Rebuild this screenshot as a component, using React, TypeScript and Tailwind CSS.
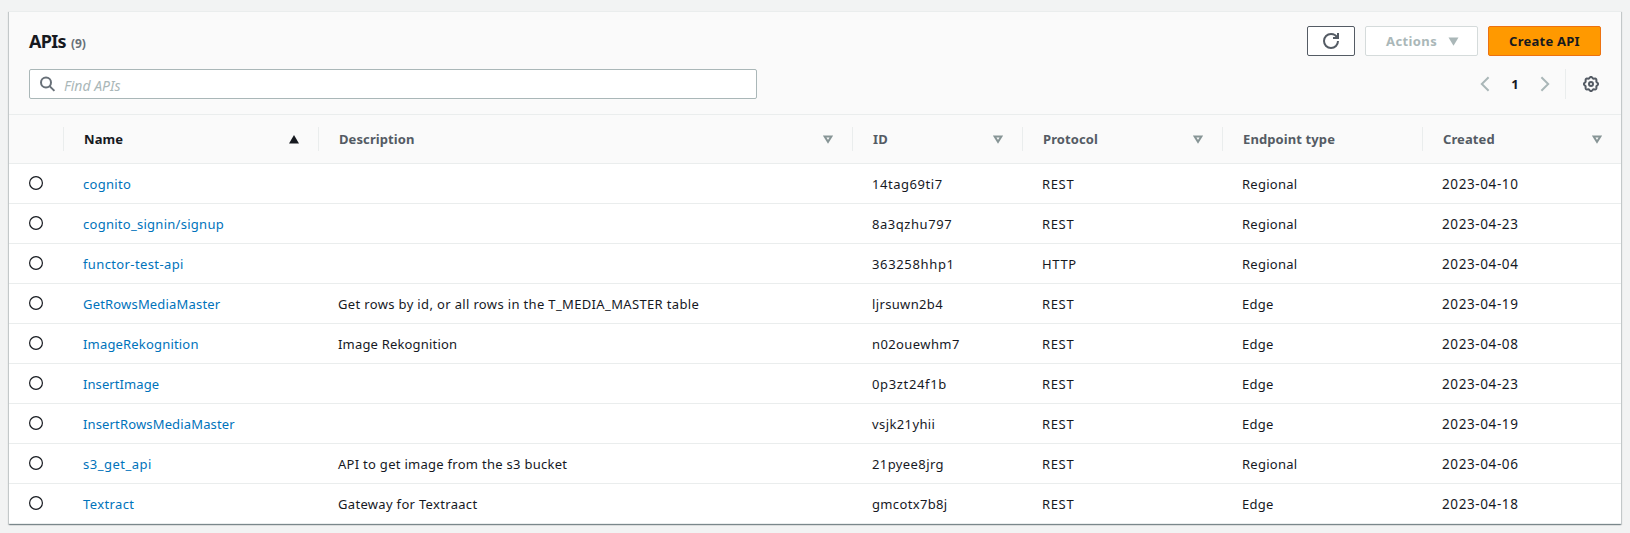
import React from "react";

type Api = {
  name: string;
  nameTracking: string;
  description?: string;
  descriptionTracking?: string;
  id: string;
  idTracking: string;
  protocol: string;
  endpoint: string;
  created: string;
};

const apis: Api[] = [
  { name: "cognito", nameTracking: "tracking-[0.3px]", id: "14tag69ti7", idTracking: "tracking-[0.55px]", protocol: "REST", endpoint: "Regional", created: "2023-04-10" },
  { name: "cognito_signin/signup", nameTracking: "tracking-[0.27px]", id: "8a3qzhu797", idTracking: "tracking-[0.55px]", protocol: "REST", endpoint: "Regional", created: "2023-04-23" },
  { name: "functor-test-api", nameTracking: "tracking-[0.38px]", id: "363258hhp1", idTracking: "tracking-[0.65px]", protocol: "HTTP", endpoint: "Regional", created: "2023-04-04" },
  { name: "GetRowsMediaMaster", nameTracking: "tracking-[0.18px]", description: "Get rows by id, or all rows in the T_MEDIA_MASTER table", descriptionTracking: "tracking-[0.35px]", id: "ljrsuwn2b4", idTracking: "tracking-[0.35px]", protocol: "REST", endpoint: "Edge", created: "2023-04-19" },
  { name: "ImageRekognition", nameTracking: "tracking-[0.18px]", description: "Image Rekognition", descriptionTracking: "tracking-[0.18px]", id: "n02ouewhm7", idTracking: "tracking-[0.4px]", protocol: "REST", endpoint: "Edge", created: "2023-04-08" },
  { name: "InsertImage", nameTracking: "tracking-[0.08px]", id: "0p3zt24f1b", idTracking: "tracking-[0.65px]", protocol: "REST", endpoint: "Edge", created: "2023-04-23" },
  { name: "InsertRowsMediaMaster", nameTracking: "tracking-[0.15px]", id: "vsjk21yhii", idTracking: "tracking-[0.4px]", protocol: "REST", endpoint: "Edge", created: "2023-04-19" },
  { name: "s3_get_api", nameTracking: "tracking-[0.5px]", description: "API to get image from the s3 bucket", descriptionTracking: "tracking-[0.28px]", id: "21pyee8jrg", idTracking: "tracking-[0.4px]", protocol: "REST", endpoint: "Regional", created: "2023-04-06" },
  { name: "Textract", nameTracking: "tracking-[0.38px]", description: "Gateway for Textraact", descriptionTracking: "tracking-[0.32px]", id: "gmcotx7b8j", idTracking: "tracking-[0.35px]", protocol: "REST", endpoint: "Edge", created: "2023-04-18" },
];

const grid = "grid grid-cols-[54px_255px_534px_170px_200px_200px_199px]";

// Scalloped ring with eight lobes
const gearOutline =
  Array.from({ length: 96 }, (_, i) => {
    const a = (i / 96) * Math.PI * 2;
    const r = 6.5 + 0.6 * Math.cos(8 * a);
    return `${i ? "L" : "M"}${(8 + r * Math.cos(a)).toFixed(2)} ${(8 + r * Math.sin(a)).toFixed(2)}`;
  }).join("") + "Z";

function SortIcon({ active }: { active?: boolean }) {
  return active ? (
    <svg className="mt-[1px] h-[9px] w-[10px]" viewBox="0 0 10 9">
      <path d="M5 0L10 8.5H0Z" fill="#16191f" />
    </svg>
  ) : (
    <svg className="mt-[1px] h-[9px] w-[10px]" viewBox="0 0 10 9">
      <path d="M1.6 1.5H8.4L5 6.9Z" fill="none" stroke="#879596" strokeWidth="2" />
    </svg>
  );
}

function HeaderCell({ label, sort }: { label: string; sort?: "none" | "asc" }) {
  return (
    <div className="flex h-6 items-center justify-between border-l border-[#eaeded] pr-[19px] pl-5">
      <span className={sort === "asc" ? "pt-[2px] text-[#16191f]" : "pt-[2px] text-[#545b64]"}>{label}</span>
      {sort && <SortIcon active={sort === "asc"} />}
    </div>
  );
}

export default function App() {
  return (
    <div className="h-[533px] w-[1630px] bg-[#f2f3f3] px-[9px] pt-[11px] font-['Noto_Sans',sans-serif] text-[14px] text-[#16191f]">
      <section className="h-[513px] bg-white shadow-[0_1px_1px_0_rgba(0,28,36,0.3),1px_1px_1px_0_rgba(0,28,36,0.15),-1px_1px_1px_0_rgba(0,28,36,0.15)]">
        <header className="h-[104px] border-t border-b border-[#eaeded] bg-[#fafafa] px-5 pt-[14px]">
          <div className="flex h-[30px] items-center justify-between">
            <h1 className="flex items-baseline gap-[5px] text-[18px] font-bold tracking-[-0.7px]">
              APIs <span className="text-[12px] tracking-normal text-[#687078]">(9)</span>
            </h1>
            <div className="flex gap-[10px] text-[13px] font-bold tracking-[0.25px]">
              <button className="flex h-[30px] w-12 items-center justify-center rounded-[2px] border border-[#545b64] bg-white">
                <svg className="h-4 w-4" viewBox="0 0 16 16" fill="none" stroke="#545b64" strokeWidth="2">
                  <path d="M15 8c0 3.9-3.1 7-7 7s-7-3.1-7-7 3.1-7 7-7c2.8 0 5.3 1.6 6.3 4" />
                  <path d="M10 5h5V0" />
                </svg>
              </button>
              <button className="flex h-[30px] w-[113px] items-center rounded-[2px] border border-[#d5dbdb] bg-white pl-5 text-[#aab7b8]">
                <span className="w-[62px] pt-[1px] text-left tracking-[0.4px]">Actions</span>
                <svg className="h-[9px] w-[11px]" viewBox="0 0 11 9">
                  <path d="M0.5 0.5H10.5L5.5 8.8Z" fill="#aab7b8" />
                </svg>
              </button>
              <button className="flex h-[30px] w-[113px] items-center justify-center rounded-[2px] border border-[#ec7211] bg-[#ff9900] pt-[1px]">
                Create API
              </button>
            </div>
          </div>
          <div className="mt-[13px] flex h-[30px] items-center justify-between">
            <div className="flex h-[30px] w-[728px] items-center rounded-[2px] border border-[#aab7b8] bg-white pl-[10px]">
              <svg className="mb-[1px] h-4 w-4" viewBox="0 0 16 16" fill="none" stroke="#687078" strokeWidth="2">
                <circle cx="6" cy="6.5" r="5" />
                <path d="M9.6 10.1L14.4 14.9" />
              </svg>
              <span className="ml-2 pt-[2px] text-[#aab7b8] italic">Find APIs</span>
            </div>
            <div className="flex h-[30px] items-center">
              <svg className="mb-[1px] h-4 w-[10px]" viewBox="0 0 10 16" fill="none" stroke="#aab7b8" strokeWidth="2">
                <path d="M8.6 1.2L1.8 8L8.6 14.8" />
              </svg>
              <span className="w-[50px] pt-[1px] text-center text-[13px] font-bold">1</span>
              <svg className="mb-[1px] h-4 w-[10px]" viewBox="0 0 10 16" fill="none" stroke="#aab7b8" strokeWidth="2">
                <path d="M1.4 1.2L8.2 8L1.4 14.8" />
              </svg>
              <div className="ml-[15px] h-[30px] border-l border-[#eaeded]" />
              <svg className="mr-[2px] mb-[1px] ml-[17px] h-4 w-4" viewBox="0 0 16 16" fill="none" stroke="#545b64" strokeWidth="2">
                <path d={gearOutline} />
                <circle cx="8" cy="8" r="2" />
              </svg>
            </div>
          </div>
        </header>
        <div className={`${grid} h-[49px] items-center border-b border-[#eaeded] bg-[#fafafa] text-[13px] font-bold tracking-[0.1px]`}>
          <div />
          <HeaderCell label="Name" sort="asc" />
          <HeaderCell label="Description" sort="none" />
          <HeaderCell label="ID" sort="none" />
          <HeaderCell label="Protocol" sort="none" />
          <HeaderCell label="Endpoint type" />
          <HeaderCell label="Created" sort="none" />
        </div>
        {apis.map((api) => (
          <div key={api.name} className={`${grid} h-10 items-center border-b border-[#eaeded] pt-[2px] text-[13px]`}>
            <div className="flex pl-5">
              <svg className="mb-[3px] h-[15px] w-[15px]" viewBox="0 0 15 15">
                <circle cx="7" cy="7" r="6.4" fill="#fff" stroke="#16191f" strokeWidth="1.2" />
              </svg>
            </div>
            <a className={`pl-5 text-[#0073bb] ${api.nameTracking}`}>{api.name}</a>
            <span className={`pl-5 ${api.descriptionTracking ?? ""}`}>{api.description}</span>
            <span className={`pl-5 ${api.idTracking}`}>{api.id}</span>
            <span className="pl-5 tracking-[0.65px]">{api.protocol}</span>
            <span className="pl-5 tracking-[0.25px]">{api.endpoint}</span>
            <span className="pl-5 text-[13.5px] tracking-[0.6px]">{api.created}</span>
          </div>
        ))}
      </section>
    </div>
  );
}
